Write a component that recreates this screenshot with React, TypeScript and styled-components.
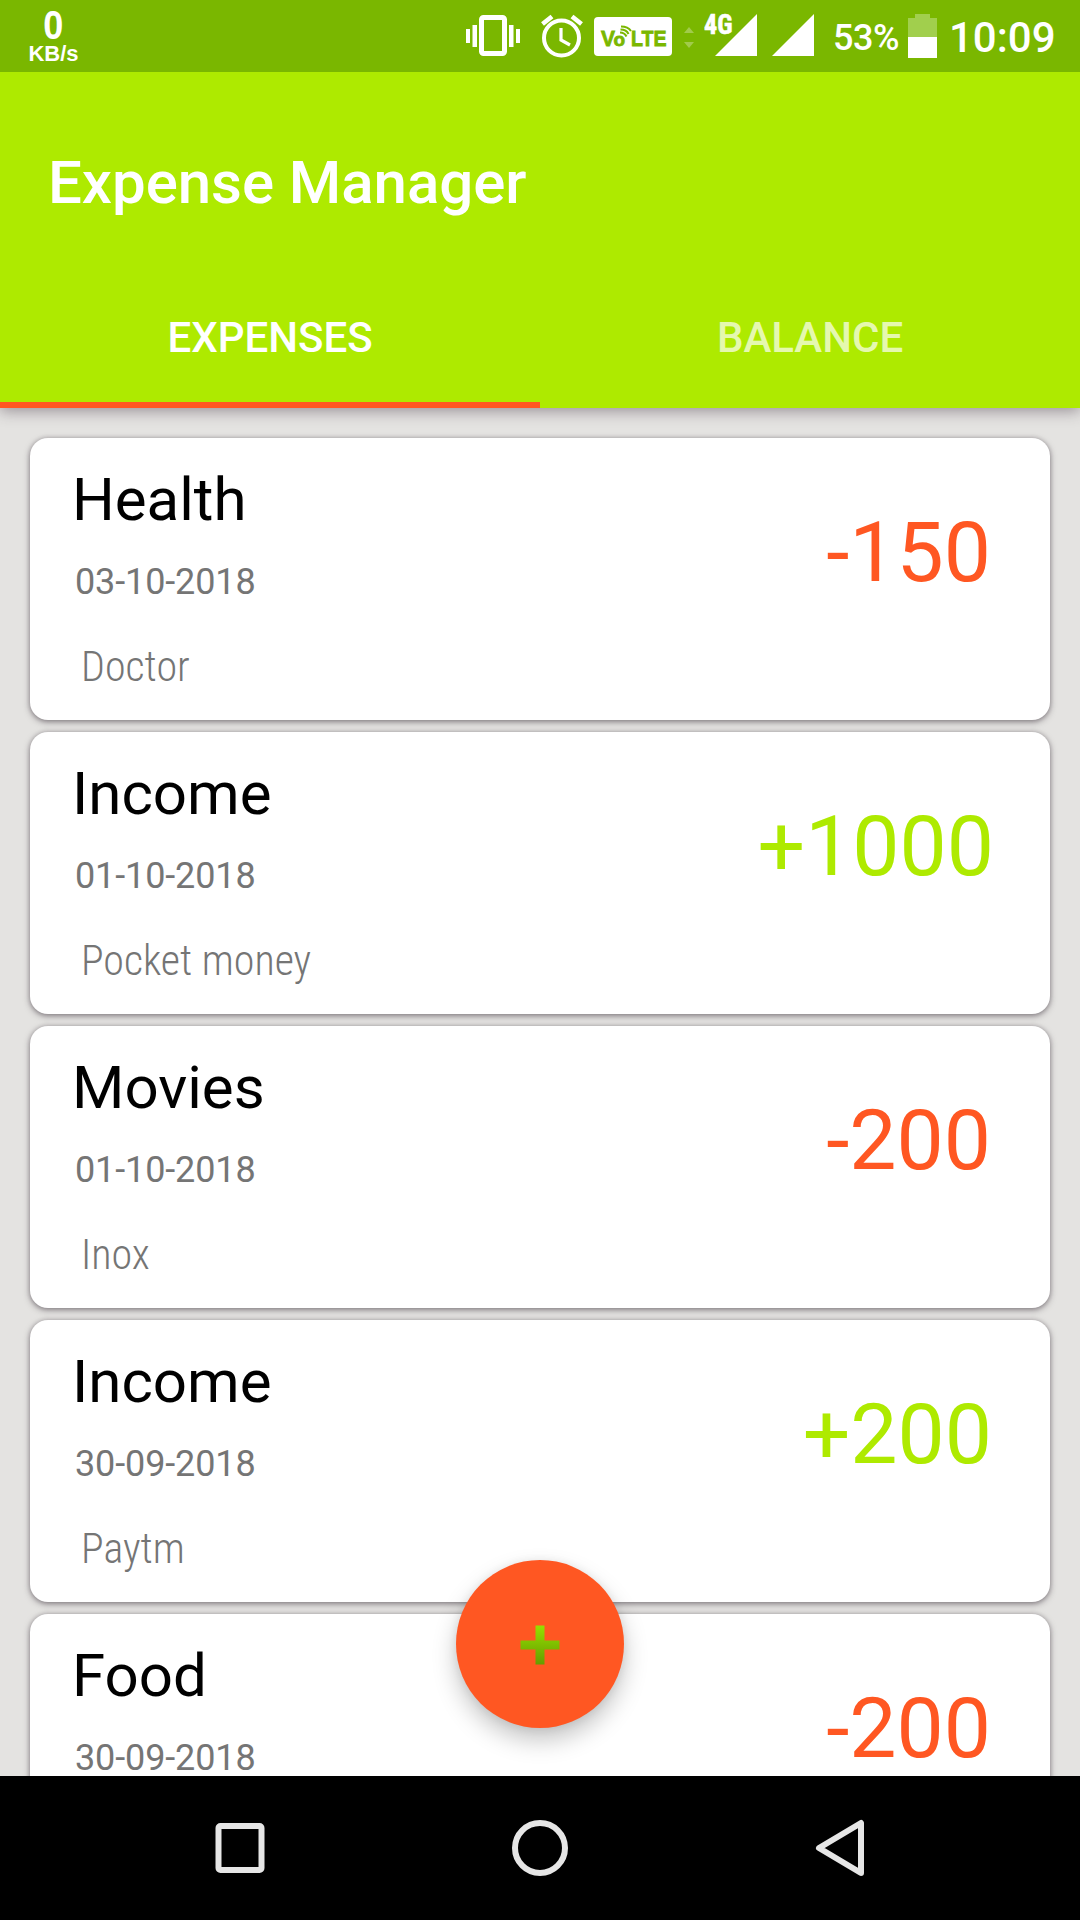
import React from "react";
import styled, { createGlobalStyle } from "styled-components";

const Global = createGlobalStyle`
  * { box-sizing: border-box; }
  body { margin: 0; font-family: Roboto, "Liberation Sans", sans-serif; background: #e4e3e1; }
`;

const Screen = styled.div`
  width: 1080px;
  height: 1920px;
  display: flex;
  flex-direction: column;
  overflow: hidden;
  position: relative;
  background: #e4e3e1;
`;

const StatusBar = styled.div`
  flex: none;
  height: 72px;
  padding: 0 25px 0 28px;
  display: flex;
  justify-content: space-between;
  background: #7ab700;
  color: #fff;
  position: relative;
  z-index: 2;
`;

const NetSpeed = styled.div`
  display: flex;
  flex-direction: column;
  align-items: center;
  padding-top: 5px;
  font-family: "Liberation Sans", Arial, sans-serif;
  font-weight: 700;
  width: 51px;
`;

const SpeedValue = styled.div`
  font-size: 41px;
  line-height: 40px;
  transform: scaleX(0.88);
`;

const SpeedUnit = styled.div`
  font-size: 22px;
  line-height: 18px;
  white-space: nowrap;
`;

const StatusIcons = styled.div`
  display: flex;
  height: 72px;
`;

const StatusIcon = styled.svg<{ $left: number }>`
  display: block;
  flex: none;
  height: 72px;
  margin-left: ${(p) => p.$left}px;
`;

const Battery = styled.div`
  width: 64px;
  margin-left: 19px;
  padding-top: 2px;
  font-size: 36px;
  line-height: 72px;
  font-weight: 500;
  letter-spacing: -0.4px;
  white-space: nowrap;
`;

const Clock = styled.div`
  width: 106px;
  margin-left: 12px;
  padding-top: 2px;
  font-size: 42px;
  line-height: 72px;
  font-weight: 500;
  white-space: nowrap;
`;

const Header = styled.header`
  flex: none;
  height: 336px;
  display: flex;
  flex-direction: column;
  background: #aeea00;
  color: #fff;
  position: relative;
  z-index: 1;
  box-shadow: 0 3px 14px rgba(60, 45, 60, 0.45);
`;

const Title = styled.h1`
  margin: 0;
  flex: 1;
  padding: 76px 0 0 48px;
  font-size: 60px;
  line-height: 70px;
  font-weight: 500;
  letter-spacing: -0.05px;
`;

const Tabs = styled.nav`
  display: flex;
  height: 144px;
`;

const Tab = styled.div<{ $active?: boolean }>`
  flex: 1;
  display: flex;
  align-items: center;
  justify-content: center;
  padding-top: 9px;
  font-size: 42px;
  line-height: 50px;
  font-weight: 500;
  color: ${(p) => (p.$active ? "#fff" : "rgba(255,255,255,0.7)")};
  border-bottom: 6px solid ${(p) => (p.$active ? "#ff5722" : "transparent")};
`;

const List = styled.main`
  flex: 1;
  min-height: 0;
  overflow: hidden;
  padding: 30px 30px 0;
  display: flex;
  flex-direction: column;
  gap: 12px;
`;

const Card = styled.article`
  flex: none;
  height: 282px;
  border-radius: 18px;
  background: #fff;
  display: flex;
  justify-content: space-between;
  padding: 0 57px 0 43px;
  box-shadow: 0 2px 6px rgba(50, 40, 50, 0.5), 0 0 4px rgba(50, 40, 50, 0.2);
`;

const Details = styled.div`
  display: flex;
  flex-direction: column;
  padding-top: 27px;
`;

const Category = styled.div`
  font-size: 60px;
  line-height: 70px;
  color: #000;
  margin-left: -1px;
`;

const DateText = styled.div`
  margin: 26px 0 0 2px;
  font-size: 36px;
  line-height: 42px;
  letter-spacing: -0.12px;
  color: #757575;
`;

const Note = styled.div`
  margin: 39px 0 0 8px;
  font-family: "Roboto Condensed", Roboto, sans-serif;
  font-stretch: 75%;
  font-weight: 300;
  font-size: 42px;
  line-height: 50px;
  color: #757575;
`;

const Amount = styled.div<{ $income: boolean; $inset: number }>`
  padding-top: 66px;
  margin-right: ${(p) => p.$inset}px;
  font-size: 84px;
  line-height: 98px;
  color: ${(p) => (p.$income ? "#aeea00" : "#ff5722")};
`;

const Fab = styled.button`
  position: absolute;
  left: 456px;
  top: 1560px;
  width: 168px;
  height: 168px;
  padding: 1px 0 0;
  border: 0;
  border-radius: 50%;
  background: #ff5722;
  box-shadow: 0 12px 24px rgba(0, 0, 0, 0.23), 0 1px 10px rgba(0, 0, 0, 0.08);
  display: flex;
  align-items: center;
  justify-content: center;
  z-index: 2;
`;

const NavBar = styled.footer`
  flex: none;
  height: 144px;
  background: #000;
  display: flex;
  justify-content: center;
  gap: 240px;
  align-items: center;
  position: relative;
  z-index: 3;
`;

const entries = [
  { category: "Health", date: "03-10-2018", note: "Doctor", amount: -150 },
  { category: "Income", date: "01-10-2018", note: "Pocket money", amount: 1000 },
  { category: "Movies", date: "01-10-2018", note: "Inox", amount: -200 },
  { category: "Income", date: "30-09-2018", note: "Paytm", amount: 200 },
  { category: "Food", date: "30-09-2018", note: "", amount: -200 },
];

// Wider amounts sit slightly closer to the card's right edge.
const amountInset = (amount: number) => (amount < 0 ? 2 : amount >= 1000 ? -1 : 1);

const BadgeText = styled.text`
  font-family: "Liberation Sans", Arial, sans-serif;
  font-weight: 700;
  fill: #7ab700;
  stroke: #7ab700;
  stroke-width: 0.8px;
`;

const NetworkText = styled.text`
  font-family: "Roboto Condensed", Roboto, sans-serif;
  font-stretch: 75%;
  font-weight: 700;
  fill: #fff;
  stroke: #fff;
  stroke-width: 0.6px;
`;

const Signal = () => <path d="M0 56 L42 14 V56Z" fill="#fff" />;

export default function App() {
  return (
    <Screen>
      <Global />
      <StatusBar>
        <NetSpeed>
          <SpeedValue>0</SpeedValue>
          <SpeedUnit>KB/s</SpeedUnit>
        </NetSpeed>
        <StatusIcons>
          <StatusIcon $left={0} width="54" viewBox="0 0 54 72" fill="#fff">
            <rect x="0" y="29" width="4" height="14" />
            <rect x="6.5" y="25" width="4.5" height="22" />
            <rect x="15.5" y="17.5" width="23" height="36" rx="2" fill="none" stroke="#fff" strokeWidth="5" />
            <rect x="43" y="25" width="4.5" height="22" />
            <rect x="50" y="29" width="4" height="14" />
          </StatusIcon>
          <StatusIcon $left={21} width="42" viewBox="0 0 42 72" fill="none" stroke="#fff">
            <circle cx="20.5" cy="38" r="17.5" strokeWidth="4" />
            <path d="M20 28 V40 L29 45" strokeWidth="3.2" />
            <path d="M1.5 24 L11 16.5 M31 16.5 L40.5 24" strokeWidth="4.6" />
          </StatusIcon>
          <StatusIcon $left={11} width="78" viewBox="0 0 78 72">
            <rect x="0" y="17" width="78" height="39" rx="4" fill="#fff" />
            <BadgeText x="7" y="45.7" fontSize="22" textLength="14" lengthAdjust="spacingAndGlyphs">V</BadgeText>
            <BadgeText x="19.5" y="45.7" fontSize="19">o</BadgeText>
            <g fill="none" stroke="#7ab700" strokeWidth="2">
              <path d="M26 32.5 Q30.5 32.5 32.5 36.5" />
              <path d="M26.5 29.5 Q32.5 29.5 34.5 34" />
              <path d="M27 26.5 Q34 26.5 37 31" />
            </g>
            <BadgeText x="37" y="45.7" fontSize="22" textLength="35.5" lengthAdjust="spacingAndGlyphs">LTE</BadgeText>
          </StatusIcon>
          <StatusIcon $left={12} width="10" viewBox="0 0 10 72" fill="#a1cb4b">
            <path d="M0 33 L5 27 L10 33Z M0 42 H10 L5 48Z" />
          </StatusIcon>
          <StatusIcon $left={10} width="53" viewBox="0 0 53 72">
            <NetworkText x="0" y="33.7" fontSize="27.5" textLength="28.5" lengthAdjust="spacingAndGlyphs">4G</NetworkText>
            <g transform="translate(11 0)"><Signal /></g>
          </StatusIcon>
          <StatusIcon $left={15} width="42" viewBox="0 0 42 72">
            <Signal />
          </StatusIcon>
          <Battery>53%</Battery>
          <StatusIcon $left={11} width="29" viewBox="0 0 29 72">
            <path d="M0 18 H7 V14 H22 V18 H29 V37 H0Z" fill="#a1cf4d" />
            <rect x="0" y="37" width="29" height="21" fill="#fff" />
          </StatusIcon>
          <Clock>10:09</Clock>
        </StatusIcons>
      </StatusBar>
      <Header>
        <Title>Expense Manager</Title>
        <Tabs>
          <Tab $active>EXPENSES</Tab>
          <Tab>BALANCE</Tab>
        </Tabs>
      </Header>
      <List>
        {entries.map((e, i) => (
          <Card key={i}>
            <Details>
              <Category>{e.category}</Category>
              <DateText>{e.date}</DateText>
              {e.note && <Note>{e.note}</Note>}
            </Details>
            <Amount $income={e.amount > 0} $inset={amountInset(e.amount)}>
              {e.amount > 0 ? `+${e.amount}` : e.amount}
            </Amount>
          </Card>
        ))}
      </List>
      <Fab aria-label="Add">
        <svg width="40" height="40" viewBox="0 0 40 40">
          <defs>
            <linearGradient id="plus" x1="0" y1="0" x2="0" y2="1">
              <stop offset="0" stopColor="#95e000" />
              <stop offset="1" stopColor="#669c00" />
            </linearGradient>
          </defs>
          <path d="M15.5 0.5 H24.5 V15.5 H39.5 V24.5 H24.5 V39.5 H15.5 V24.5 H0.5 V15.5 H15.5Z" fill="url(#plus)" />
        </svg>
      </Fab>
      <NavBar>
        <svg width="60" height="60" viewBox="0 0 60 60" fill="none" stroke="#e6e6e6" strokeWidth="6">
          <rect x="8.5" y="8" width="43" height="44" rx="2" />
        </svg>
        <svg width="60" height="60" viewBox="0 0 60 60" fill="none" stroke="#e6e6e6" strokeWidth="6">
          <circle cx="30" cy="30" r="25" />
        </svg>
        <svg width="60" height="60" viewBox="0 0 60 60" fill="none" stroke="#e6e6e6" strokeWidth="6" strokeLinejoin="round">
          <path d="M51 5 V55 L9 30Z" />
        </svg>
      </NavBar>
    </Screen>
  );
}
